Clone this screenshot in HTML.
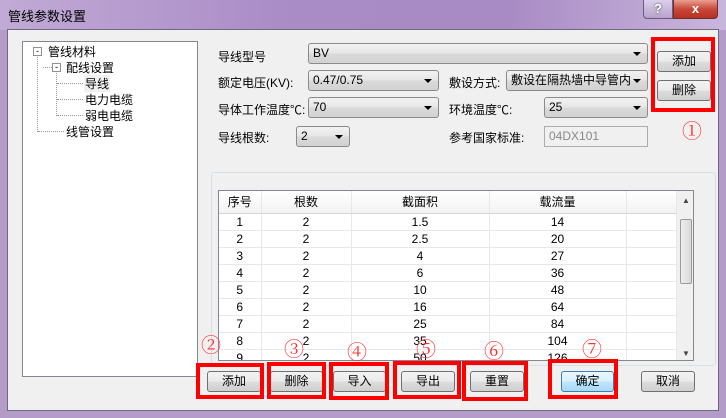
<!DOCTYPE html>
<html><head><meta charset="utf-8"><style>
*{box-sizing:border-box;margin:0;padding:0}
body{width:726px;height:418px;overflow:hidden;background:#b49cc8;font-family:"Liberation Sans","Noto Sans CJK SC",sans-serif;font-size:12px;color:#000;position:relative}
.abs{position:absolute}
.title{left:0;top:0;width:726px;height:30px;background:linear-gradient(90deg,#c1aad6,#a98bc6 40%,#a88bc4 70%,#c9b6dd);}
.client{left:7px;top:29px;width:712px;height:382px;background:#f0f0f0;border:1px solid #6f6a80}
.btn{position:absolute;height:21px;border:1px solid #707070;border-radius:3px;background:linear-gradient(#f2f2f2,#ebebeb 50%,#dddddd 51%,#cfcfcf);text-align:center;line-height:19px;font-size:12px}
.combo{position:absolute;height:21px;border:1px solid #8a8a8a;border-radius:3px;background:linear-gradient(#f2f2f2,#e6e6e6 50%,#dadada 51%,#d2d2d2);padding-left:4px;line-height:19px;font-size:12px}
.combo:after{content:"";position:absolute;right:6px;top:8px;border:4px solid transparent;border-top:4px solid #000;border-bottom:0}
.red{position:absolute;border:4px solid #ff0000}
.num{position:absolute;color:#ff3030;font-size:20px;font-family:"Liberation Serif","Noto Serif CJK SC",serif;line-height:20px}
.lbl{position:absolute;font-size:12px}
table{border-collapse:collapse;font-size:12px}
td{height:17px;text-align:center;border-right:1px solid #e8e8e8;border-bottom:1px solid #e8e8e8;padding:0}
</style></head><body>
<div class="abs title"></div>
<div class="abs" style="left:8px;top:6px;font-size:13px">管线参数设置</div>
<div class="abs" style="left:643px;top:0;width:30px;height:19px;border:1px solid #6a5a80;border-top:0;border-radius:0 0 0 4px;background:linear-gradient(#ddd0ea,#b6a1cc);color:#fff;text-align:center;font-weight:bold;font-size:13px;line-height:18px;text-shadow:0 0 2px #333">?</div>
<div class="abs" style="left:673px;top:0;width:45px;height:19px;border:1px solid #6a3030;border-top:0;border-radius:0 0 4px 0;background:linear-gradient(#e8a090,#c8483a 50%,#b83020);color:#fff;text-align:center;font-weight:bold;font-size:13px;line-height:18px">x</div>
<div class="abs client"></div>
<!-- tree -->
<div class="abs" style="left:22px;top:41px;width:176px;height:336px;background:#fff;border:1px solid #828790"></div>
<div class="abs" style="left:33px;top:47px;width:9px;height:9px;border:1px solid #919191;background:#fff;font-size:9px;line-height:6px;text-align:center">-</div>
<div class="lbl" style="left:48px;top:43px">管线材料</div>
<div class="abs" style="left:37px;top:57px;height:75px;border-left:1px dotted #999"></div>
<div class="abs" style="left:52px;top:63px;width:9px;height:9px;border:1px solid #919191;background:#fff;font-size:9px;line-height:6px;text-align:center">-</div>
<div class="abs" style="left:43px;top:67px;width:9px;border-top:1px dotted #999"></div>
<div class="lbl" style="left:66px;top:59px">配线设置</div>
<div class="abs" style="left:56px;top:73px;height:43px;border-left:1px dotted #999"></div>
<div class="abs" style="left:57px;top:83px;width:26px;border-top:1px dotted #999"></div>
<div class="abs" style="left:57px;top:99px;width:26px;border-top:1px dotted #999"></div>
<div class="abs" style="left:57px;top:115px;width:26px;border-top:1px dotted #999"></div>
<div class="abs" style="left:38px;top:131px;width:26px;border-top:1px dotted #999"></div>
<div class="lbl" style="left:84px;top:75px;background:#f0f0f0;padding:0 1px">导线</div>
<div class="lbl" style="left:85px;top:91px">电力电缆</div>
<div class="lbl" style="left:85px;top:107px">弱电电缆</div>
<div class="lbl" style="left:66px;top:123px">线管设置</div>
<!-- form -->
<div class="lbl" style="left:218px;top:48px">导线型号</div>
<div class="combo" style="left:308px;top:43px;width:340px">BV</div>
<div class="lbl" style="left:218px;top:74px">额定电压(KV):</div>
<div class="combo" style="left:308px;top:70px;width:131px">0.47/0.75</div>
<div class="lbl" style="left:449px;top:74px">敷设方式:</div>
<div class="combo" style="left:506px;top:70px;width:142px">敷设在隔热墙中导管内</div>
<div class="lbl" style="left:218px;top:101px">导体工作温度℃:</div>
<div class="combo" style="left:308px;top:97px;width:131px">70</div>
<div class="lbl" style="left:449px;top:101px">环境温度℃:</div>
<div class="combo" style="left:544px;top:97px;width:104px">25</div>
<div class="lbl" style="left:218px;top:129px">导线根数:</div>
<div class="combo" style="left:296px;top:126px;width:54px">2</div>
<div class="lbl" style="left:449px;top:129px">参考国家标准:</div>
<div class="abs" style="left:544px;top:126px;width:104px;height:21px;border:1px solid #adadad;background:#f0f0f0;color:#888;padding-left:4px;line-height:19px">04DX101</div>
<div class="btn" style="left:657px;top:51px;width:54px">添加</div>
<div class="btn" style="left:657px;top:80px;width:54px">删除</div>
<div class="red" style="left:651px;top:37px;width:64px;height:75px"></div>
<div class="num" style="left:682px;top:122px">①</div>
<!-- group + table -->
<div class="abs" style="left:211px;top:172px;width:505px;height:194px;border:1px solid #d5dfe5;border-radius:3px"></div>
<div class="abs" style="left:218px;top:190px;width:476px;height:171px;border:1px solid #828790;background:#fff;overflow:hidden">
<table style="position:absolute;left:0;top:0;width:458px">
<tr style="background:linear-gradient(#fff,#f3f3f3)"><td style="width:42px;height:22px;border-bottom:1px solid #d5d5d5">序号</td><td style="width:90px;border-bottom:1px solid #d5d5d5">根数</td><td style="width:138px;border-bottom:1px solid #d5d5d5">截面积</td><td style="width:137px;border-bottom:1px solid #d5d5d5">载流量</td><td style="border-bottom:1px solid #d5d5d5"></td></tr>
<tr><td>1</td><td>2</td><td>1.5</td><td>14</td><td></td></tr>
<tr><td>2</td><td>2</td><td>2.5</td><td>20</td><td></td></tr>
<tr><td>3</td><td>2</td><td>4</td><td>27</td><td></td></tr>
<tr><td>4</td><td>2</td><td>6</td><td>36</td><td></td></tr>
<tr><td>5</td><td>2</td><td>10</td><td>48</td><td></td></tr>
<tr><td>6</td><td>2</td><td>16</td><td>64</td><td></td></tr>
<tr><td>7</td><td>2</td><td>25</td><td>84</td><td></td></tr>
<tr><td>8</td><td>2</td><td>35</td><td>104</td><td></td></tr>
<tr><td>9</td><td>2</td><td>50</td><td>126</td><td></td></tr>
</table>
<div class="abs" style="left:458px;top:0;width:17px;height:169px;background:#f0f0f0"></div>
<div class="abs" style="left:461px;top:28px;width:12px;height:65px;border:1px solid #999;border-radius:2px;background:linear-gradient(90deg,#eee,#d8d8d8)"></div>
<div class="abs" style="left:463px;top:5px;font-size:8px;color:#444">▲</div>
<div class="abs" style="left:463px;top:158px;font-size:8px;color:#444">▼</div>
</div>
<!-- bottom buttons -->
<div class="btn" style="left:207px;top:371px;width:54px">添加</div>
<div class="btn" style="left:270px;top:371px;width:53px">删除</div>
<div class="btn" style="left:333px;top:371px;width:53px">导入</div>
<div class="btn" style="left:401px;top:371px;width:54px">导出</div>
<div class="btn" style="left:470px;top:371px;width:54px">重置</div>
<div class="btn" style="left:561px;top:371px;width:53px;border-color:#3c7fb1;background:linear-gradient(#eaf6fd,#d9f0fc 50%,#bee6fd 51%,#a7d9f5)">确定</div>
<div class="btn" style="left:641px;top:371px;width:54px">取消</div>
<div class="red" style="left:196px;top:363px;width:68px;height:36px"></div>
<div class="red" style="left:267px;top:362px;width:59px;height:37px"></div>
<div class="red" style="left:329px;top:362px;width:60px;height:38px"></div>
<div class="red" style="left:393px;top:361px;width:68px;height:38px"></div>
<div class="red" style="left:462px;top:361px;width:66px;height:40px"></div>
<div class="red" style="left:548px;top:359px;width:70px;height:40px"></div>
<div class="num" style="left:201px;top:336px">②</div>
<div class="num" style="left:284px;top:340px">③</div>
<div class="num" style="left:347px;top:343px">④</div>
<div class="num" style="left:416px;top:340px">⑤</div>
<div class="num" style="left:484px;top:342px">⑥</div>
<div class="num" style="left:582px;top:340px">⑦</div>
</body></html>
